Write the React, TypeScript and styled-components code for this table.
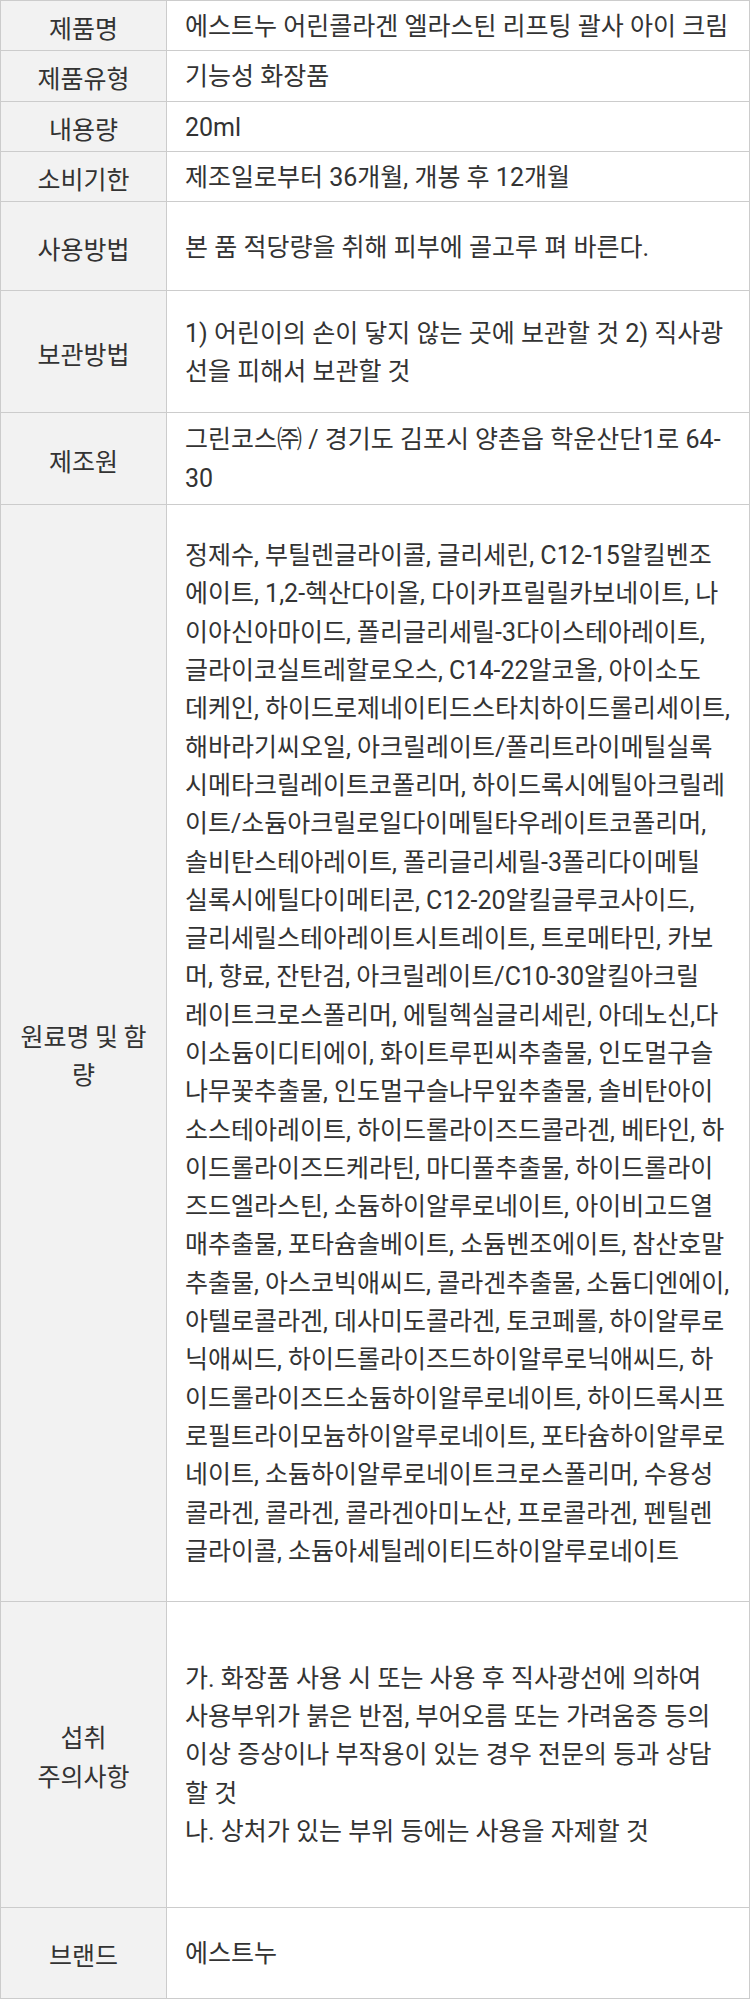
import React from 'react';
import styled, { createGlobalStyle } from 'styled-components';

const GlobalStyle = createGlobalStyle`
  html, body {
    margin: 0;
    padding: 0;
    background: #ffffff;
  }
`;

type Row = {
  label: string[];
  lines: string[];
  pad: number;
};

// lines are kept as they wrap in the product sheet
const ROWS: Row[] = [
  { label: ['제품명'], lines: ['에스트누 어린콜라겐 엘라스틴 리프팅 괄사 아이 크림'], pad: 5.5 },
  { label: ['제품유형'], lines: ['기능성 화장품'], pad: 5.5 },
  { label: ['내용량'], lines: ['20ml'], pad: 5.5 },
  { label: ['소비기한'], lines: ['제조일로부터 36개월, 개봉 후 12개월'], pad: 5.5 },
  { label: ['사용방법'], lines: ['본 품 적당량을 취해 피부에 골고루 펴 바른다.'], pad: 25 },
  {
    label: ['보관방법'],
    lines: ['1) 어린이의 손이 닿지 않는 곳에 보관할 것 2) 직사광', '선을 피해서 보관할 것'],
    pad: 21.8,
  },
  {
    label: ['제조원'],
    lines: ['그린코스㈜ / 경기도 김포시 양촌읍 학운산단1로 64-', '30'],
    pad: 7.2,
  },
  {
    label: ['원료명 및 함량'],
    lines: [
      '정제수, 부틸렌글라이콜, 글리세린, C12-15알킬벤조',
      '에이트, 1,2-헥산다이올, 다이카프릴릴카보네이트, 나',
      '이아신아마이드, 폴리글리세릴-3다이스테아레이트,',
      '글라이코실트레할로오스, C14-22알코올, 아이소도',
      '데케인, 하이드로제네이티드스타치하이드롤리세이트,',
      '해바라기씨오일, 아크릴레이트/폴리트라이메틸실록',
      '시메타크릴레이트코폴리머, 하이드록시에틸아크릴레',
      '이트/소듐아크릴로일다이메틸타우레이트코폴리머,',
      '솔비탄스테아레이트, 폴리글리세릴-3폴리다이메틸',
      '실록시에틸다이메티콘, C12-20알킬글루코사이드,',
      '글리세릴스테아레이트시트레이트, 트로메타민, 카보',
      '머, 향료, 잔탄검, 아크릴레이트/C10-30알킬아크릴',
      '레이트크로스폴리머, 에틸헥실글리세린, 아데노신,다',
      '이소듐이디티에이, 화이트루핀씨추출물, 인도멀구슬',
      '나무꽃추출물, 인도멀구슬나무잎추출물, 솔비탄아이',
      '소스테아레이트, 하이드롤라이즈드콜라겐, 베타인, 하',
      '이드롤라이즈드케라틴, 마디풀추출물, 하이드롤라이',
      '즈드엘라스틴, 소듐하이알루로네이트, 아이비고드열',
      '매추출물, 포타슘솔베이트, 소듐벤조에이트, 참산호말',
      '추출물, 아스코빅애씨드, 콜라겐추출물, 소듐디엔에이,',
      '아텔로콜라겐, 데사미도콜라겐, 토코페롤, 하이알루로',
      '닉애씨드, 하이드롤라이즈드하이알루로닉애씨드, 하',
      '이드롤라이즈드소듐하이알루로네이트, 하이드록시프',
      '로필트라이모늄하이알루로네이트, 포타슘하이알루로',
      '네이트, 소듐하이알루로네이트크로스폴리머, 수용성',
      '콜라겐, 콜라겐, 콜라겐아미노산, 프로콜라겐, 펜틸렌',
      '글라이콜, 소듐아세틸레이티드하이알루로네이트',
    ],
    pad: 31,
  },
  {
    label: ['섭취', '주의사항'],
    lines: [
      '가. 화장품 사용 시 또는 사용 후 직사광선에 의하여',
      '사용부위가 붉은 반점, 부어오름 또는 가려움증 등의',
      '이상 증상이나 부작용이 있는 경우 전문의 등과 상담',
      '할 것',
      '나. 상처가 있는 부위 등에는 사용을 자제할 것',
    ],
    pad: 56.7,
  },
  { label: ['브랜드'], lines: ['에스트누'], pad: 26 },
];

export default function App() {
  return (
    <>
      <GlobalStyle />
      <InfoTable>
        <colgroup>
          <LabelCol />
          <col />
        </colgroup>
        <tbody>
          {ROWS.map((row, i) => (
            <tr key={i}>
              <Label $pad={row.pad}>
                {row.label.map((l) => (
                  <LabelLine key={l}>{l}</LabelLine>
                ))}
              </Label>
              <Value $pad={row.pad}>
                {row.lines.map((l, j) => (
                  <TextLine key={j}>{l}</TextLine>
                ))}
              </Value>
            </tr>
          ))}
        </tbody>
      </InfoTable>
    </>
  );
}

const InfoTable = styled.table`
  width: 750px;
  border-collapse: collapse;
  table-layout: fixed;
  font-family: Roboto, 'Noto Sans CJK KR', sans-serif;
  font-size: 25px;
  line-height: 38.3px;
  color: #333333;
`;

const LabelCol = styled.col`
  width: 166px;
`;

const Cell = styled.td<{ $pad: number }>`
  border: 1px solid #cccccc;
  padding: ${(p) => p.$pad + 1.5}px 17px ${(p) => p.$pad - 1.5}px 18px;
  vertical-align: middle;
`;

const Label = styled(Cell).attrs({ as: 'th' })`
  background: #f2f2f2;
  font-weight: 400;
  text-align: center;
  padding-left: 12px;
  padding-right: 12px;
`;

const LabelLine = styled.div`
  font-family: 'Noto Sans CJK KR', sans-serif;
`;

const Value = styled(Cell)`
  text-align: left;
`;

const TextLine = styled.div`
  white-space: nowrap;
`;
